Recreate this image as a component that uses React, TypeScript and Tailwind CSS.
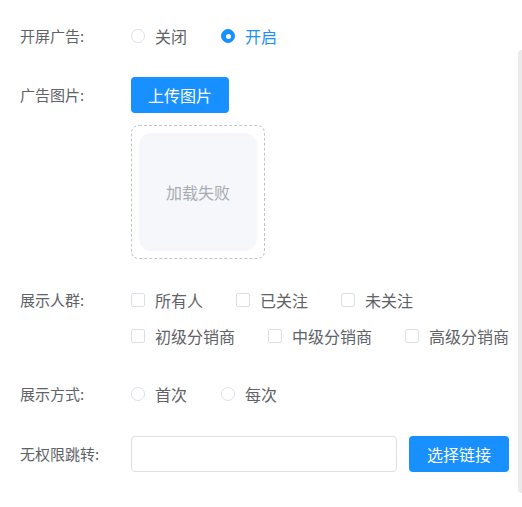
import React from 'react'

const font = { fontFamily: '"Noto Sans CJK SC", "Noto Sans", sans-serif' }

function Radio({ label, checked }: { label: string; checked?: boolean }) {
  return (
    <label className="flex shrink-0 items-center mr-[34px] cursor-pointer whitespace-nowrap">
      {checked ? (
        <span className="flex h-[14px] w-[14px] items-center justify-center rounded-full border border-[#1890ff] bg-[#1890ff]">
          <span className="h-[5px] w-[5px] rounded-full bg-white" />
        </span>
      ) : (
        <span className="h-[14px] w-[14px] rounded-full border border-[#dcdfe6] bg-white" />
      )}
      <span className={`pl-[10px] text-[16px] leading-none ${checked ? 'text-[#1890ff]' : 'text-[#606266]'}`}>
        {label}
      </span>
    </label>
  )
}

function Checkbox({ label }: { label: string }) {
  return (
    <label className="flex shrink-0 items-center mr-[33px] cursor-pointer whitespace-nowrap">
      <span className="h-[14px] w-[14px] rounded-[2px] border border-[#dcdfe6] bg-white" />
      <span className="pl-[10px] text-[16px] leading-none text-[#606266]">{label}</span>
    </label>
  )
}

function Label({ children }: { children: React.ReactNode }) {
  return <div className="w-[111px] shrink-0 whitespace-nowrap text-[15px] text-[#606266]">{children}</div>
}

export default function App() {
  return (
    <div className="relative min-h-screen overflow-hidden bg-white pl-5 pt-[16px]" style={font}>
      {/* 开屏广告 */}
      <div className="flex h-10 items-center">
        <Label>开屏广告:</Label>
        <div className="flex items-center">
          <Radio label="关闭" />
          <Radio label="开启" checked />
        </div>
      </div>

      {/* 广告图片 */}
      <div className="mt-[21px] flex">
        <div className="flex h-9 items-center">
          <Label>广告图片:</Label>
        </div>
        <div className="flex flex-col">
          <button className="h-9 w-[98px] rounded-[4px] bg-[#1890ff] text-[16px] text-white">
            上传图片
          </button>
          <div className="mt-3 h-[134px] w-[134px] rounded-[8px] border border-dashed border-[#c0c4cc] p-[7px]">
            <div className="flex h-full w-full items-center justify-center rounded-[12px] bg-[#f5f7fa] text-[16px] text-[#a8abb2]">
              加载失败
            </div>
          </div>
        </div>
      </div>

      {/* 展示人群 */}
      <div className="mt-[23px] flex">
        <div className="flex h-9 items-center">
          <Label>展示人群:</Label>
        </div>
        <div className="flex flex-col">
          <div className="flex h-9 items-center">
            <Checkbox label="所有人" />
            <Checkbox label="已关注" />
            <Checkbox label="未关注" />
          </div>
          <div className="flex h-9 items-center">
            <Checkbox label="初级分销商" />
            <Checkbox label="中级分销商" />
            <Checkbox label="高级分销商" />
          </div>
        </div>
      </div>

      {/* 展示方式 */}
      <div className="mt-[22px] flex h-9 items-center">
        <Label>展示方式:</Label>
        <div className="flex items-center">
          <Radio label="首次" />
          <Radio label="每次" />
        </div>
      </div>

      {/* 无权限跳转 */}
      <div className="mt-6 flex h-9 items-center">
        <Label>无权限跳转:</Label>
        <input className="h-9 w-[266px] shrink-0 rounded-[4px] border border-[#dcdfe6] bg-white px-3 text-[14px] outline-none" />
        <button className="ml-3 h-9 w-[100px] shrink-0 rounded-[4px] bg-[#1890ff] text-[16px] text-white">
          选择链接
        </button>
      </div>

      {/* scrollbar */}
      <div className="absolute right-0 top-[50px] h-[443px] w-[4px] rounded-tl-[4px] rounded-bl-[4px] bg-[#ebebeb]" />
    </div>
  )
}
